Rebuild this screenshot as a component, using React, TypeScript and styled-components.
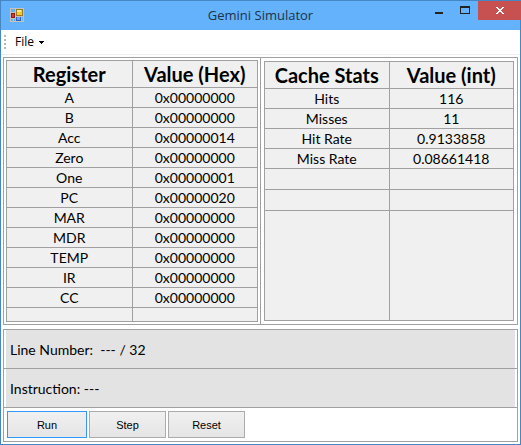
import React from "react";
import styled, { createGlobalStyle } from "styled-components";

const line = "#a0a0a0";

const GlobalStyle = createGlobalStyle`
  * { box-sizing: border-box; }
  body { margin: 0; background: #fff; color: #000; font-family: Lato, Carlito, sans-serif; }
`;

const Window = styled.div`
  display: flex;
  flex-direction: column;
  min-height: 100vh;
  border: 1px solid #4487c4;
`;

const TitleBar = styled.header`
  display: grid;
  grid-template-columns: 1fr auto 1fr;
  height: 29px;
  background: #64b2fc;
`;

const AppIcon = styled.svg`
  display: block;
  margin: 7px 0 0 9px;
`;

const Title = styled.h1`
  margin: 0;
  font: 400 13px/29px "Open Sans", sans-serif;
  color: #1c3247;
`;

const WindowControls = styled.div`
  display: flex;
  justify-content: flex-end;
  align-items: flex-start;
  margin-right: -1px;
`;

const ControlButton = styled.button<{ $close?: boolean }>`
  width: ${(p) => (p.$close ? 43 : 26)}px;
  height: 19px;
  padding: 0;
  border: 0;
  background: ${(p) => (p.$close ? "#c75050" : "transparent")};

  svg { display: block; margin: 0 auto; }
`;

const MenuBar = styled.nav`
  display: flex;
  align-items: center;
  height: 25px;
  padding-left: 3px;
  border-bottom: 1px solid #f0f0f0;
`;

const Grip = styled.div`
  width: 2px;
  height: 14px;
  background: repeating-linear-gradient(#b8b8b8 0 2px, transparent 2px 4px);
`;

const MenuButton = styled.button`
  display: flex;
  align-items: center;
  gap: 5px;
  margin-left: 9px;
  padding: 0;
  border: 0;
  background: none;
  font: 12px/20px "Open Sans", sans-serif;
  color: #000;
`;

const Content = styled.main`
  display: flex;
  flex-direction: column;
  gap: 4px;
  padding: 2px;
`;

const TablesPanel = styled.section`
  display: grid;
  grid-template-columns: 256fr 257fr;
  border: 1px solid ${line};
`;

const TableSlot = styled.div<{ $divided?: boolean }>`
  padding: ${(p) => (p.$divided ? 3 : 2)}px;
  border-left: ${(p) => (p.$divided ? `1px solid ${line}` : "0")};
`;

const DataTable = styled.table`
  width: 100%;
  table-layout: fixed;
  border-collapse: separate;
  border-spacing: 0;
  border: solid ${line};
  border-width: 1px 0 0 1px;
  background: #f0f0f0;
  text-align: center;
`;

const HeadCell = styled.th`
  height: 27px;
  padding: 0;
  border: solid ${line};
  border-width: 0 1px 1px 0;
  font-size: 20px;
  line-height: 26px;
  font-weight: 700;
`;

const Cell = styled.td<{ $height?: number }>`
  height: ${(p) => p.$height ?? 20}px;
  padding: 0;
  border: solid ${line};
  border-width: 0 1px 1px 0;
  font-size: 14px;
  line-height: 19px;
`;

const StatusPanel = styled.section`
  border: 1px solid ${line};
`;

const StatusRow = styled.div`
  padding: 0 2px;
  border-bottom: 1px solid ${line};
`;

const StatusText = styled.p`
  margin: 0;
  padding: 2px 0 0 4px;
  background: #e3e3e3;
  font-size: 14px;
  line-height: 36px;
  white-space: pre;
`;

const Actions = styled.div`
  display: flex;
  gap: 2px;
  padding: 3px;
`;

const ActionButton = styled.button<{ $primary?: boolean }>`
  width: ${(p) => (p.$primary ? 80 : 77)}px;
  height: 27px;
  padding: 0;
  border: 1px solid ${(p) => (p.$primary ? "#3399ff" : "#acacac")};
  background: linear-gradient(#f0f0f0, #e5e5e5);
  font: 11px/24px "Liberation Sans", sans-serif;
  color: #000;
`;

type Row = { name: string; value: string; height?: number };

const registers: Row[] = [
  { name: "A", value: "0x00000000" },
  { name: "B", value: "0x00000000" },
  { name: "Acc", value: "0x00000014" },
  { name: "Zero", value: "0x00000000" },
  { name: "One", value: "0x00000001" },
  { name: "PC", value: "0x00000020" },
  { name: "MAR", value: "0x00000000" },
  { name: "MDR", value: "0x00000000" },
  { name: "TEMP", value: "0x00000000" },
  { name: "IR", value: "0x00000000" },
  { name: "CC", value: "0x00000000" },
  { name: "", value: "", height: 14 },
];

const cacheStats: Row[] = [
  { name: "Hits", value: "116" },
  { name: "Misses", value: "11" },
  { name: "Hit Rate", value: "0.9133858" },
  { name: "Miss Rate", value: "0.08661418" },
  { name: "", value: "", height: 21 },
  { name: "", value: "", height: 21 },
  { name: "", value: "", height: 110 },
];

function ValueTable({ heads, rows }: { heads: string[]; rows: Row[] }) {
  return (
    <DataTable>
      <thead>
        <tr>
          {heads.map((h) => (
            <HeadCell key={h} scope="col">{h}</HeadCell>
          ))}
        </tr>
      </thead>
      <tbody>
        {rows.map((r, i) => (
          <tr key={i}>
            <Cell $height={r.height}>{r.name}</Cell>
            <Cell $height={r.height}>{r.value}</Cell>
          </tr>
        ))}
      </tbody>
    </DataTable>
  );
}

export default function App() {
  return (
    <>
      <GlobalStyle />
      <Window>
        <TitleBar>
          <AppIcon width="14" height="14" viewBox="0 0 14 14" shapeRendering="crispEdges" aria-hidden="true">
            <path fill="#c3c3bf" d="M0 0h14v14H0z" />
            <path fill="#6aaef0" d="M1 1h4v3H1zM1 11h2v2H1zM4 11h1v2H4zM12 9h1v4h-1z" />
            <path fill="#9a7a1c" d="M6 1h7v7H6z" />
            <path fill="#f5c838" d="M7 2h5v5H7z" />
            <path fill="#ffe58a" d="M7 2h4v2H7z" />
            <path fill="#8c1c1c" d="M1 5h4v5H1z" />
            <path fill="#d04038" d="M2 6h2v3H2z" />
            <path fill="#2f62c0" d="M6 9h5v4H6z" />
            <path fill="#6ea2f2" d="M7 9h3v3H7z" />
          </AppIcon>
          <Title>Gemini Simulator</Title>
          <WindowControls>
            <ControlButton aria-label="Minimize">
              <svg width="8" height="19" shapeRendering="crispEdges"><path fill="#222" d="M0 11h8v2H0z" /></svg>
            </ControlButton>
            <ControlButton aria-label="Maximize">
              <svg width="10" height="19" shapeRendering="crispEdges">
                <path fill="#222" fillRule="evenodd" d="M0 5h10v8H0zM1 7v5h8V7z" />
              </svg>
            </ControlButton>
            <ControlButton $close aria-label="Close">
              <svg width="8" height="19" shapeRendering="crispEdges">
                <path fill="#fff" d="M0 6h2v1H0zM6 6h2v1H6zM1 7h2v1H1zM5 7h2v1H5zM2 8h4v1H2zM3 9h2v1H3zM2 10h4v1H2zM1 11h2v1H1zM5 11h2v1H5zM0 12h2v1H0zM6 12h2v1H6z" />
              </svg>
            </ControlButton>
          </WindowControls>
        </TitleBar>
        <MenuBar>
          <Grip />
          <MenuButton aria-haspopup="menu">
            File
            <svg width="5" height="3" shapeRendering="crispEdges" aria-hidden="true">
              <path d="M0 0h5v1H0zM1 1h3v1H1zM2 2h1v1H2z" />
            </svg>
          </MenuButton>
        </MenuBar>
        <Content>
          <TablesPanel>
            <TableSlot>
              <ValueTable heads={["Register", "Value (Hex)"]} rows={registers} />
            </TableSlot>
            <TableSlot $divided>
              <ValueTable heads={["Cache Stats", "Value (int)"]} rows={cacheStats} />
            </TableSlot>
          </TablesPanel>
          <StatusPanel>
            <StatusRow><StatusText>{"Line Number:  --- / 32"}</StatusText></StatusRow>
            <StatusRow><StatusText>Instruction: ---</StatusText></StatusRow>
            <Actions>
              <ActionButton $primary>Run</ActionButton>
              <ActionButton>Step</ActionButton>
              <ActionButton>Reset</ActionButton>
            </Actions>
          </StatusPanel>
        </Content>
      </Window>
    </>
  );
}
